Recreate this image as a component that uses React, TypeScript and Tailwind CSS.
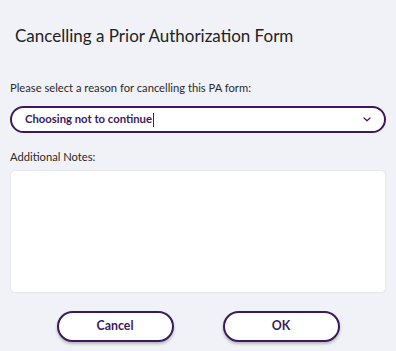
import React from 'react';

const CancelPaForm: React.FC = () => {
  return (
    <div className="w-[396px] h-[351px] bg-[#f1f2f7] font-['Lato',sans-serif] text-[#222222] overflow-hidden">
      <div className="pl-[15px] pt-[24px]">
        <h1 className="text-[17px] leading-[24px] font-normal">Cancelling a Prior Authorization Form</h1>
      </div>

      <div className="px-[10px] pt-[32px]">
        <label className="block text-[11.2px] leading-[16px] text-[#2a2a2a]">
          Please select a reason for cancelling this PA form:
        </label>
        <div className="mt-[10px] h-[27px] rounded-full border-2 border-[#3b1a60] bg-white flex items-center justify-between pl-[13px] pr-[13px]">
          <span className="text-[11.3px] font-bold text-[#3b1a60] flex items-center">
            Choosing not to continue
            <span className="inline-block w-px h-[14px] bg-[#3b1a60] ml-px"></span>
          </span>
          <svg width="8" height="5" viewBox="0 0 8 5" fill="none">
            <path d="M1 1 L4 3.8 L7 1" stroke="#3b1a60" strokeWidth="1.2" strokeLinecap="round" strokeLinejoin="round" />
          </svg>
        </div>

        <label className="block mt-[16px] text-[11.2px] leading-[16px] text-[#2a2a2a]">Additional Notes:</label>
        <div className="mt-[5px] h-[123px] rounded-[5px] bg-white border border-[#e8e9ef] shadow-[0_0_2px_rgba(0,0,0,0.04)]"></div>

        <div className="flex justify-center gap-[49px] mt-[18px]">
          <button className="w-[117px] h-[31px] rounded-full border-2 border-[#3b1a60] bg-white text-[12.4px] font-bold text-[#3b1a60] shadow-[0_2px_3px_rgba(0,0,0,0.25)]">
            Cancel
          </button>
          <button className="w-[117px] h-[31px] rounded-full border-2 border-[#3b1a60] bg-white text-[12.4px] font-bold text-[#3b1a60] shadow-[0_2px_3px_rgba(0,0,0,0.25)]">
            OK
          </button>
        </div>
      </div>
    </div>
  );
};

export default function App() {
  return <CancelPaForm />;
}
